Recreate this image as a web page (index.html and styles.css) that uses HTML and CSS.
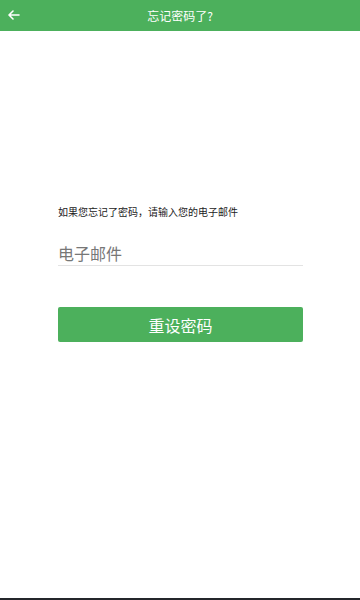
FILE: index.html
```html
<!DOCTYPE html>
<html lang="zh-CN">
<head>
<meta charset="utf-8">
<title>忘记密码了?</title>
<link rel="stylesheet" href="styles.css">
</head>
<body>
<div class="screen">
  <header class="topbar">
    <span class="back">
      <svg width="12" height="10" viewBox="0 0 12 10"><path d="M11 5H1.5M5 1L1 5l4 4" fill="none" stroke="#fff" stroke-width="1.6" stroke-linecap="round" stroke-linejoin="round"/></svg>
    </span>
    <h1 class="title">忘记密码了?</h1>
  </header>
  <main class="content">
    <p class="hint">如果您忘记了密码，请输入您的电子邮件</p>
    <div class="field"><span class="placeholder">电子邮件</span></div>
    <button class="submit">重设密码</button>
  </main>
  <div class="bottom-edge"></div>
</div>
</body>
</html>
```
FILE: styles.css
```css
html, body {
  margin: 0;
  padding: 0;
  background: #fff;
}
body {
  font-family: "Noto Sans CJK SC", "Noto Sans", sans-serif;
}
.screen {
  height: 600px;
  display: flex;
  flex-direction: column;
}
.topbar {
  height: 31px;
  background: #4cb05c;
  display: flex;
  align-items: center;
  justify-content: center;
  position: relative;
  flex-shrink: 0;
}
.back {
  position: absolute;
  left: 8px;
  top: 10px;
  width: 12px;
  height: 10px;
  display: flex;
}
.title {
  margin: 0;
  color: #fff;
  font-size: 12px;
  font-weight: 400;
  line-height: 14px;
}
.content {
  padding: 0 57px 0 58px;
  display: flex;
  flex-direction: column;
  flex: 1;
}
.hint {
  margin: 174px 0 0;
  font-size: 10px;
  line-height: 14px;
  color: #222;
}
.field {
  margin-top: 22px;
  height: 24px;
  border-bottom: 1px solid #e3e3e3;
  display: flex;
  align-items: center;
}
.placeholder {
  font-size: 16px;
  line-height: 20px;
  color: #777;
}
.submit {
  margin-top: 41px;
  height: 35px;
  width: 245px;
  border: none;
  border-radius: 2px;
  background: #4cb05c;
  color: #fff;
  font-family: "Noto Sans CJK SC", "Noto Sans", sans-serif;
  font-size: 16px;
  padding: 0;
}
.bottom-edge {
  height: 2px;
  background: #24262b;
  flex-shrink: 0;
}
```
